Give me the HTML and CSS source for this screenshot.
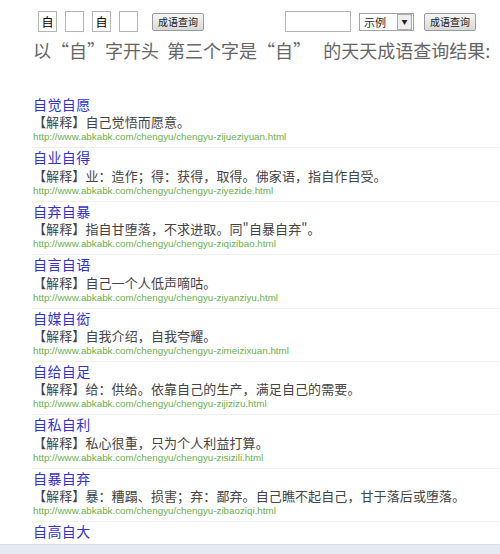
FILE: index.html
```html
<!DOCTYPE html>
<html lang="zh-CN">
<head>
    <meta charset="UTF-8">
    <title>成语查询</title>
    <link rel="stylesheet" href="styles.css">
</head>
<body>
    <div class="search-bar">
        <form class="search-form">
            <input class="char-box" type="text" value="自">
            <input class="char-box" type="text" value="">
            <input class="char-box" type="text" value="自">
            <input class="char-box" type="text" value="">
            <button type="button" class="query-btn">成语查询</button>
        </form>
        <form class="search-form right">
            <input class="word-box" type="text" value="">
            <div class="fake-select">
                <span>示例</span>
                <span class="arrow">&#9660;</span>
            </div>
            <button type="button" class="query-btn">成语查询</button>
        </form>
    </div>
    <h1 class="result-title">以“自”字开头&nbsp; 第三个字是“自”&nbsp;&nbsp; 的天天成语查询结果:</h1>

    <ul class="result-list">
        <li>
            <a class="idiom" href="#">自觉自愿</a>
            <p class="meaning">【解释】自己觉悟而愿意。</p>
            <p class="url">http://www.abkabk.com/chengyu/chengyu-zijueziyuan.html</p>
        </li>
        <li>
            <a class="idiom" href="#">自业自得</a>
            <p class="meaning">【解释】业：造作；得：获得，取得。佛家语，指自作自受。</p>
            <p class="url">http://www.abkabk.com/chengyu/chengyu-ziyezide.html</p>
        </li>
        <li>
            <a class="idiom" href="#">自弃自暴</a>
            <p class="meaning">【解释】指自甘堕落，不求进取。同"自暴自弃"。</p>
            <p class="url">http://www.abkabk.com/chengyu/chengyu-ziqizibao.html</p>
        </li>
        <li>
            <a class="idiom" href="#">自言自语</a>
            <p class="meaning">【解释】自己一个人低声嘀咕。</p>
            <p class="url">http://www.abkabk.com/chengyu/chengyu-ziyanziyu.html</p>
        </li>
        <li>
            <a class="idiom" href="#">自媒自衒</a>
            <p class="meaning">【解释】自我介绍，自我夸耀。</p>
            <p class="url">http://www.abkabk.com/chengyu/chengyu-zimeizixuan.html</p>
        </li>
        <li>
            <a class="idiom" href="#">自给自足</a>
            <p class="meaning">【解释】给：供给。依靠自己的生产，满足自己的需要。</p>
            <p class="url">http://www.abkabk.com/chengyu/chengyu-zijizizu.html</p>
        </li>
        <li>
            <a class="idiom" href="#">自私自利</a>
            <p class="meaning">【解释】私心很重，只为个人利益打算。</p>
            <p class="url">http://www.abkabk.com/chengyu/chengyu-zisizili.html</p>
        </li>
        <li>
            <a class="idiom" href="#">自暴自弃</a>
            <p class="meaning">【解释】暴：糟蹋、损害；弃：鄙弃。自己瞧不起自己，甘于落后或堕落。</p>
            <p class="url">http://www.abkabk.com/chengyu/chengyu-zibaoziqi.html</p>
        </li>
        <li>
            <a class="idiom" href="#">自高自大</a>
            <p class="meaning">【解释】自以为了不起。</p>
            <p class="url">http://www.abkabk.com/chengyu/chengyu-zigaozida.html</p>
        </li>
    </ul>

    <div class="status-bar"></div>
</body>
</html>
```

FILE: styles.css
```css
body {
    font-family: "Noto Sans CJK SC", "Liberation Sans", sans-serif;
    margin: 0;
    padding: 0;
    background-color: #fff;
    overflow: hidden;
}
.search-bar {
    display: flex;
    justify-content: space-between;
    padding: 11px 24px 0 38px;
    height: 21px;
}
.search-form {
    display: flex;
    align-items: center;
    gap: 8px;
    margin: 0;
}
.char-box {
    width: 19px;
    height: 21px;
    box-sizing: border-box;
    border: 1px solid #b5b5b5;
    padding: 0;
    text-align: center;
    font-family: "Noto Sans CJK SC", sans-serif;
    font-size: 12px;
    color: #000;
}
.query-btn {
    margin-left: 6px;
    height: 18px;
    padding: 0 5px;
    font-family: "Noto Sans CJK SC", sans-serif;
    font-size: 10px;
    line-height: 16px;
    color: #222;
    border: 1px solid #9a9a9a;
    border-radius: 2px;
    background: linear-gradient(#f6f6f6, #d8d8d8);
}
.right .query-btn {
    margin-left: 2px;
}
.word-box {
    width: 66px;
    height: 21px;
    box-sizing: border-box;
    border: 1px solid #b5b5b5;
}
.fake-select {
    display: flex;
    align-items: center;
    justify-content: space-between;
    width: 55px;
    height: 18px;
    box-sizing: border-box;
    border: 1px solid #a5a5a5;
    font-size: 11px;
    color: #222;
    padding-left: 4px;
}
.fake-select .arrow {
    width: 13px;
    height: 14px;
    margin-right: 1px;
    border: 1px solid #aaa;
    background: #eee;
    font-size: 6px;
    line-height: 14px;
    text-align: center;
}
.result-title {
    margin: 5px 0 0 33px;
    font-size: 18px;
    font-weight: normal;
    color: #666;
    line-height: 26px;
    white-space: nowrap;
}
.result-list {
    list-style: none;
    margin: 32px 0 0 32px;
    padding: 0;
}
.result-list li {
    border-bottom: 1px solid #f0f0f0;
    padding: 0 0 4px 1px;
}
.idiom {
    display: block;
    color: #3333cc;
    text-decoration: none;
    font-size: 14px;
    letter-spacing: 0.4px;
    line-height: 18.4px;
}
.meaning {
    margin: 0;
    color: #444;
    font-size: 13px;
    letter-spacing: 0.1px;
    line-height: 18px;
}
.url {
    margin: 0;
    color: #6ab04c;
    font-family: "Liberation Sans", sans-serif;
    font-size: 9.8px;
    line-height: 12px;
}
.status-bar {
    position: fixed;
    left: 0;
    right: 0;
    bottom: 0;
    height: 9px;
    background: #e6ebf3;
    border-top: 1px solid #d8dfea;
}
```
